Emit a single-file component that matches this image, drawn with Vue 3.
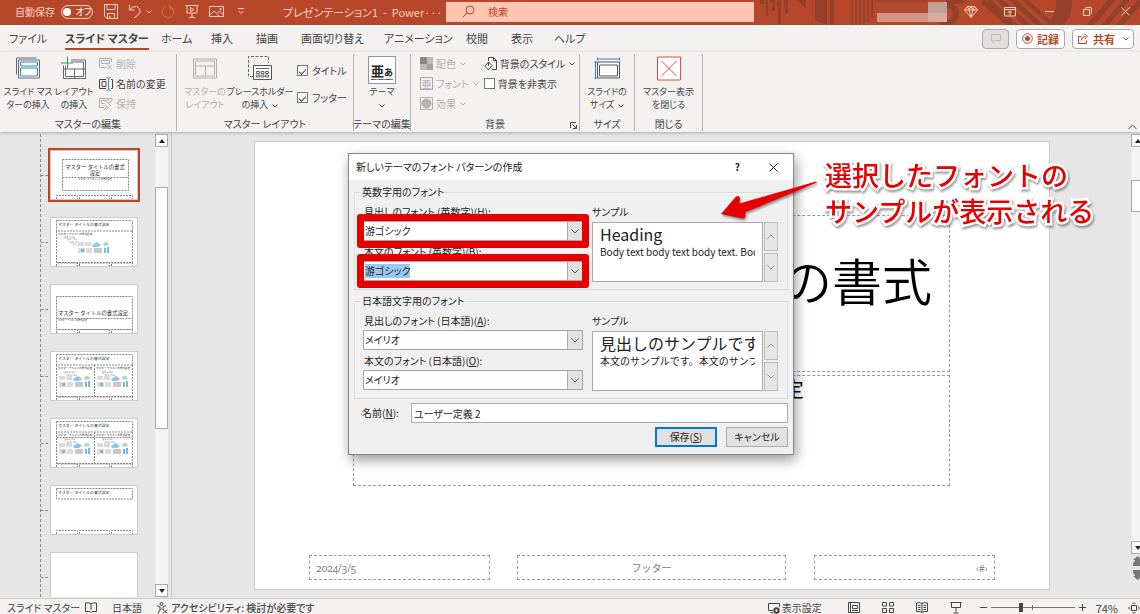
<script setup>
import { ref } from 'vue'

const tabs = ['ファイル', 'スライド マスター', 'ホーム', '挿入', '描画', '画面切り替え', 'アニメーション', '校閲', '表示', 'ヘルプ']
const thumbs = ['title', 'content', 'section', 'two', 'compare', 'titleOnly', 'blank']

const showTitle = ref(true)
const showFooter = ref(true)
const hideBg = ref(false)
const themeName = ref('ユーザー定義 2')
const zoom = ref(36)

const groups = [
  {
    id: 'latin',
    legend: '英数字用のフォント',
    fields: [
      { id: 'lh', label: '見出しのフォント (英数字)(', key: 'H', value: '游ゴシック', marked: true, selected: false },
      { id: 'lb', label: '本文のフォント (英数字)(', key: 'B', value: '游ゴシック', marked: true, selected: true }
    ],
    heading: 'Heading',
    body: 'Body text body text body text. Body text body text.'
  },
  {
    id: 'jp',
    legend: '日本語文字用のフォント',
    fields: [
      { id: 'jh', label: '見出しのフォント (日本語)(', key: 'A', value: 'メイリオ', marked: false, selected: false },
      { id: 'jb', label: '本文のフォント (日本語)(', key: 'O', value: 'メイリオ', marked: false, selected: false }
    ],
    heading: '見出しのサンプルです',
    body: '本文のサンプルです。本文のサンプルです。'
  }
]
</script>

<template>
  <div class="app">
    <header class="titlebar">
      <svg class="pattern" width="380" height="25" viewBox="0 0 380 25" aria-hidden="true">
        <g fill="#94412b">
          <path d="M0 0h4v4H0zM6 0h2v16H6zM10 0h5v11h-3V3h-2zM17 0h4v24h-3V6h-1zM24 0h4v13h-3zM37 0h9v9zM55 0h12v25l-12-5zM70 0h4v25h-4z" />
          <path d="M91 0h2v25h-2zM95 0h2v25h-2zM99 0h2v25h-2zM103 0h2v25h-2zM107 0h2v22h-2zM111 0h2v18h-2z" />
          <path d="M116 0h51v12h-40z" opacity=".6" />
          <path d="M186 0h20l-4 4h-16zM222 0h9l27 25h-12l-24-21zM236 0h7l28 25h-8zM249 0h7l28 25h-8zM262 0h6l22 20v5zM296 0h16q1 14-8 25h-18q11-10 10-25zM326 25l22-25h8l-22 25zM341 25l22-25h7l-22 25zM356 25l22-25h2v6l-17 19z" />
        </g>
        <circle cx="187" cy="14" r="9" fill="none" stroke="#94412b" stroke-width="6" />
      </svg>
      <div class="quick">
        <span>自動保存</span>
        <button class="toggle" aria-label="自動保存 オフ"><i></i>オフ</button>
        <button aria-label="上書き保存"><svg width="14" height="15" viewBox="0 0 14 15"><path d="M.5.5h13v14H3l-2.500-2.500zM3 .5v5h8v-5M3.500 14.500v-5h7v5M6 14v-2" /></svg></button>
        <span class="undo">
          <button aria-label="元に戻す"><svg width="14" height="15" viewBox="0 0 14 15"><path d="M1.500 1v5h5M1.500 6Q4 2 8.500 2.500Q12.500 4 12 8Q11 11 6 14" /></svg></button>
          <svg width="6" height="4" viewBox="0 0 6 4"><path d="M.5.5L3 3 5.500.5" /></svg>
        </span>
        <button aria-label="やり直し" class="faded"><svg width="14" height="15" viewBox="0 0 14 15"><path d="M9 1v4h4M9.500 2.500Q13.500 5 12.500 9Q11 14 6.500 13.500Q1.500 12.500 1 8Q1.200 4 4.500 2" /></svg></button>
        <button aria-label="スライド ショー"><svg width="14" height="15" viewBox="0 0 14 15"><path d="M.5 1.500h13M2 1.500v7.500h10V1.500M7 9v4M4 13.500h6M5.500 3.500v4l3.500-2z" /></svg></button>
        <button aria-label="画像"><svg width="15" height="15" viewBox="0 0 15 15"><path d="M.5 2.500h14v10H.5zM1 11l4-4 5 5M8.500 9L10.500 7l4 4M11 4.500h1v1h-1z" /></svg></button>
        <svg class="more" width="8" height="7" viewBox="0 0 8 7"><path d="M1 .5h6M1.500 3L4 5.500 6.500 3" /></svg>
      </div>
      <div class="doc-title">プレゼンテーション1&nbsp; -&nbsp; Power···</div>
      <label class="search">
        <svg width="13" height="13" viewBox="0 0 13 13"><circle cx="8" cy="5" r="4" /><path d="M5 8L.5 12.500" /></svg>
        <input type="text" placeholder="検索" aria-label="検索" />
      </label>
      <div class="account"><i></i><i></i><i></i><i></i></div>
      <div class="window-buttons">
        <button aria-label="特典"><svg width="14" height="14" viewBox="0 0 14 14"><path d="M3.500 1.500h7L13.500 5 7 12.500.5 5zM.5 5h13M3.500 1.500L5 5l2 7.500L9 5l1.500-3.500M5 5l2-3.500L9 5" /></svg></button>
        <button aria-label="リボンの表示オプション"><svg width="12" height="10" viewBox="0 0 12 10"><path d="M.5.5h11v8.500H.5zM.5 2.500h11M6 8V4M4 5.500L6 3.800l2 1.700" /></svg></button>
        <button aria-label="最小化"><svg width="9" height="9" viewBox="0 0 9 9"><path d="M0 4.500h9" /></svg></button>
        <button aria-label="元に戻す (縮小)"><svg width="9" height="9" viewBox="0 0 9 9"><path d="M.5 2.500h6v6h-6zM2.500 2.500v-1.500l.5-.5h5l.5.5v5l-.5.500h-1.500" /></svg></button>
        <button aria-label="閉じる"><svg width="9" height="9" viewBox="0 0 9 9"><path d="M.5.5l8 8M8.500.5l-8 8" /></svg></button>
      </div>
    </header>

    <nav class="tabs">
      <div class="tab-list">
        <a v-for="(t, i) in tabs" :key="t" href="#" :class="{ active: i === 1 }">{{ t }}</a>
      </div>
      <div class="tab-actions">
        <button class="comment" aria-label="コメント"><svg width="10" height="9" viewBox="0 0 10 9"><path d="M.5.5h9v6H4L2 8.500v-2H.5z" /></svg></button>
        <button><svg width="11" height="11" viewBox="0 0 11 11"><circle cx="5.500" cy="5.500" r="4.800" /><circle class="solid" cx="5.500" cy="5.500" r="2.500" /></svg>記録</button>
        <button class="share"><svg width="11" height="11" viewBox="0 0 11 11"><path d="M3.500 3.500h-3v7h8v-3M3 7.500Q3.500 3.500 7.500 3.500M6.500 1l3 2.500-3 2.500" /></svg>共有<svg class="caret" width="6" height="4" viewBox="0 0 6 4"><path d="M.5.5L3 3 5.500.5" /></svg></button>
      </div>
    </nav>

    <section class="ribbon">
      <div class="group g-edit">
        <div class="tools">
          <button class="big"><svg width="26" height="24" viewBox="0 0 26 24"><path stroke="#666" fill="#f3f2f1" d="M1.500 18V1.500h20" /><path stroke="#666" fill="#fff" d="M3.500 3.500h21v18h-21z" /><path stroke="#2b88c8" fill="#fff" d="M5.500 5.500h17v4h-17zM5.500 11.500h17v8h-17z" /></svg><span>スライド マス<br>ターの挿入</span></button>
          <button class="big"><svg width="26" height="24" viewBox="0 0 26 24"><path stroke="#666" fill="#fff" d="M2.500 9v13h22V3.500H10M3 12.500h21M13.500 12.500v9" /><path stroke="#666" d="M4.500 9v11h18V5.500H10" /><path stroke="#21a04a" d="M6.500 0v12M0 6.500h12" /></svg><span>レイアウト<br>の挿入</span></button>
          <div class="rows">
            <button class="small off"><svg width="14" height="14" viewBox="0 0 14 14"><path d="M7 10.500H.5v-9h12V5M2.500 3.500h8v3h-8zM8 7.500l5 5M13 7.500l-5 5" /></svg>削除</button>
            <button class="small"><svg width="14" height="14" viewBox="0 0 14 14"><path d="M7 2.500H.5v9H7M3 4.500h4v5H3zM12 2.500h1.500v9H12" /><path stroke="#2b88c8" d="M7.500.5Q9.500.5 9.500 2v10q0 1.500-2 1.500M11.500.5Q9.500.5 9.500 2v10q0 1.500 2 1.500" /></svg>名前の変更</button>
            <button class="small off"><svg width="14" height="14" viewBox="0 0 14 14"><path d="M13 4V1.500H.5v9H5M2.500 3.500h7M2.500 3.500v3h3M8 5l4 4M12.500 3.500L9.500 6.500M6 7.500l4 4M8 9.500l-3 3.500" /></svg>保持</button>
          </div>
        </div>
        <div class="caption">マスターの編集</div>
      </div>

      <div class="group g-layout">
        <div class="tools">
          <button class="big off"><svg width="26" height="24" viewBox="0 0 26 24"><path d="M1.500 2.500h23v19h-23zM3.500 4.500h19v5h-19zM3.500 9.500v10h19v-10M13.500 9.500v10" /></svg><span>マスターの<br>レイアウト</span></button>
          <button class="big"><svg width="26" height="25" viewBox="0 0 26 25"><path stroke="#666" stroke-dasharray="3 1.500" d="M6 20.500H1.500v-20h20V7" /><path stroke="#555" fill="#fff" d="M6.500 9.500h18v14h-18z" /><path stroke="#666" d="M9 12.500h13M9.500 15.500h3v2h-3zM14 15.500h3v2h-3zM18.500 15.500h3v2h-3zM9.500 19h3v2h-3zM14 19h3v2h-3zM18.500 19h3v2h-3z" /></svg><span>プレースホルダー<br>の挿入<svg class="caret" width="6" height="4" viewBox="0 0 6 4"><path d="M.5.5L3 3 5.500.5" /></svg></span></button>
          <div class="checks">
            <label><input v-model="showTitle" type="checkbox" />タイトル</label>
            <label><input v-model="showFooter" type="checkbox" />フッター</label>
          </div>
        </div>
        <div class="caption">マスター レイアウト</div>
      </div>

      <div class="group g-theme">
        <div class="tools">
          <button class="big theme"><span class="theme-icon"><b>亜<small>あ</small></b><i></i></span><span>テーマ<br><svg class="caret" width="6" height="4" viewBox="0 0 6 4"><path d="M.5.5L3 3 5.500.5" /></svg></span></button>
        </div>
        <div class="caption">テーマの編集</div>
      </div>

      <div class="group g-bg">
        <div class="tools">
          <div class="rows">
            <button class="small off"><svg width="13" height="13" viewBox="0 0 13 13" class="flat"><path fill="#888" d="M0 0h7v7H0z" /><path fill="#bbb" d="M7 0h6v7H7zM0 7h7v6H0z" /><path fill="#a0a0a0" d="M7 7h6v6H7z" /></svg>配色<svg class="caret" width="6" height="4" viewBox="0 0 6 4"><path d="M.5.5L3 3 5.500.5" /></svg></button>
            <button class="small off"><span class="glyph">亜</span>フォント<svg class="caret" width="6" height="4" viewBox="0 0 6 4"><path d="M.5.5L3 3 5.500.5" /></svg></button>
            <button class="small off"><svg width="13" height="13" viewBox="0 0 13 13"><path d="M.5.5h12v12H.5z" /><circle cx="6.500" cy="6.500" r="4.500" fill="#b4b4b4" /></svg>効果<svg class="caret" width="6" height="4" viewBox="0 0 6 4"><path d="M.5.5L3 3 5.500.5" /></svg></button>
          </div>
          <div class="rows">
            <button class="small"><svg width="13" height="14" viewBox="0 0 13 14"><path d="M4.500 4V.5h5l3 3v9H8M9.500.5v3h3M1 9l3.500-4L8 8.500 4.500 13 1 9.500zM4.500 5v4" /></svg>背景のスタイル<svg class="caret" width="6" height="4" viewBox="0 0 6 4"><path d="M.5.5L3 3 5.500.5" /></svg></button>
            <label class="small"><input v-model="hideBg" type="checkbox" />背景を非表示</label>
          </div>
        </div>
        <div class="caption">背景<button class="launcher" aria-label="背景の書式設定"><svg width="7" height="7" viewBox="0 0 7 7"><path d="M.5 6V.5H6M2.500 2.500l4 4M6.500 3v3.500H3" /></svg></button></div>
      </div>

      <div class="group g-size">
        <div class="tools">
          <button class="big"><svg width="26" height="24" viewBox="0 0 26 24"><path stroke="#2b88c8" d="M3.500 2.500h22M3.500 1v3M25.500 1v3M1.500 5v17M0 5.500h3M0 21.500h3" /><path stroke="#555" fill="#fff" d="M3.500 5.500h22v16h-22z" /><path stroke="#555" fill="#fafafa" d="M5.500 8.500h18v11h-18z" /></svg><span>スライドの<br>サイズ<svg class="caret" width="6" height="4" viewBox="0 0 6 4"><path d="M.5.5L3 3 5.500.5" /></svg></span></button>
        </div>
        <div class="caption">サイズ</div>
      </div>

      <div class="group g-close">
        <div class="tools">
          <button class="big"><svg width="24" height="24" viewBox="0 0 24 24"><path stroke="#e8483f" fill="#fff" d="M.5.5h23v23H.5z" /><path stroke="#e8483f" d="M4.500 4.500l15 15M19.500 4.500l-15 15" /></svg><span>マスター表示<br>を閉じる</span></button>
        </div>
        <div class="caption">閉じる</div>
      </div>
      <button class="collapse" aria-label="リボンを折りたたむ"><svg width="9" height="6" viewBox="0 0 9 6"><path d="M.5 5l4-4 4 4" /></svg></button>
    </section>

    <main class="work">
      <aside class="panel">
        <ul class="list">
          <li v-for="(kind, i) in thumbs" :key="kind" :class="{ current: i === 0 }">
            <svg width="86" height="48" viewBox="0 0 86 48">
              <template v-if="kind === 'title'">
                <path d="M11.500 8.500h66v31h-66zM11.500 26.500h66" />
                <text x="44" y="18" font-size="5.300" text-anchor="middle">マスター タイトルの書式</text>
                <text x="44" y="24" font-size="5.300" text-anchor="middle">設定</text>
                <text x="44" y="29" font-size="2.200" text-anchor="middle">マスター サブタイトルの書式設定</text>
              </template>
              <template v-if="kind === 'section'">
                <path d="M5.500 11.500h76v33h-76zM5.500 33.500h76" />
                <text x="7" y="30" font-size="5.300">マスター タイトルの書式設定</text>
                <text x="7" y="36" font-size="2.200">マスター テキストの書式設定</text>
              </template>
              <template v-if="['content', 'two', 'compare', 'titleOnly'].includes(kind)">
                <path d="M5.500 2.500h76v10.500h-76z" />
                <text x="7" y="8" font-size="3.900">マスター タイトルの書式設定</text>
              </template>
              <template v-if="kind === 'content'">
                <path d="M5.500 13v32h76V13" />
                <text x="7" y="16.500" font-size="2.600">マスター テキストの書式設定</text>
                <text x="11" y="19.500" font-size="2.200">・第 2 レベル</text>
                <text x="14" y="22" font-size="2">・第 3 レベル</text>
                <text x="17" y="25" font-size="1.800">・第 4 レベル</text>
                <text x="20" y="27" font-size="1.800">・第 5 レベル</text>
              </template>
              <template v-if="kind === 'two' || kind === 'compare'">
                <path d="M5.500 13v32h76V13M43.500 13v32" />
                <path v-if="kind === 'compare'" d="M5.500 18.500h76" />
                <g v-for="x in [7, 45]" :key="x">
                  <text :x="x" y="16.500" font-size="2.600">マスター テキストの書式設定</text>
                  <text :x="x + 4" y="21" font-size="2.200">・第 2 レベル</text>
                  <text :x="x + 7" y="24" font-size="2">・第 3 レベル</text>
                </g>
              </template>
              <g v-for="x in (kind === 'content' ? [27] : kind === 'two' || kind === 'compare' ? [8, 46] : [])" :key="'i' + x" :transform="`translate(${x} 24)`" class="tiles">
                <path fill="#d3dde4" d="M0 0h6v4H0zM7 0h6v4H7z" />
                <path fill="#8cc4ec" d="M14 3l5-3 4 3-3 2h-5z" />
                <path fill="#a9dcb0" d="M25 1l4-1.500L31 3l-5 1z" />
                <path fill="#dcdcdc" d="M0 6h7v5H0zM8 6h6v5H8z" />
                <path fill="#78b8e8" d="M3 7h3v3H3zM26 6h2v5h-2zM29 5h2v6h-2z" />
                <path fill="#c8c8c8" d="M16 6h8v5h-8z" />
              </g>
              <g v-if="kind !== 'blank'">
                <path d="M5.500 48v-3.500h21V48M28.500 48v-3.500h30V48M60.500 48v-3.500h21V48" />
              </g>
            </svg>
          </li>
        </ul>
        <div class="scroll">
          <button aria-label="上へ"><svg width="6" height="4" viewBox="0 0 6 4"><path d="M0 4l3-4 3 4z" /></svg></button>
          <div class="track"><div class="bar"></div></div>
          <button aria-label="下へ"><svg width="6" height="4" viewBox="0 0 6 4"><path d="M0 0l3 4 3-4z" /></svg></button>
        </div>
      </aside>

      <section class="canvas">
        <div class="slide">
          <div class="ph ph-title">マスター タイトルの書式設定</div>
          <div class="ph ph-sub">マスター サブタイトルの書式設定</div>
          <div class="ph foot date">2024/3/5</div>
          <div class="ph foot center">フッター</div>
          <div class="ph foot num">‹#›</div>
        </div>
      </section>

      <div class="scroll right">
        <button aria-label="上へ"><svg width="6" height="4" viewBox="0 0 6 4"><path d="M0 4l3-4 3 4z" /></svg></button>
        <div class="track"><div class="bar"></div></div>
        <button aria-label="下へ"><svg width="6" height="4" viewBox="0 0 6 4"><path d="M0 0l3 4 3-4z" /></svg></button>
        <button class="jump" aria-label="前のスライド"><svg width="9" height="10" viewBox="0 0 9 10"><path d="M4.500 0L9 4H7v1l2 2v3H0V7l2-2V4H0z" /></svg></button>
        <button class="jump" aria-label="次のスライド"><svg width="9" height="10" viewBox="0 0 9 10"><path d="M4.500 10L9 6H7V5l2-2V0H0v3l2 2v1H0z" /></svg></button>
      </div>
    </main>

    <footer class="status">
      <span class="mode">スライド マスター</span>
      <svg width="12" height="11" viewBox="0 0 12 11"><path d="M6 2Q3.500 0 .5 1v8.500H4Q5.500 9.500 6 10.500 6.500 9.500 8 9.500h3.500V1Q8.500 0 6 2zM6 2v6" /></svg>
      <span class="lang">日本語</span>
      <button class="acc"><svg width="12" height="12" viewBox="0 0 12 12"><circle cx="5.500" cy="2" r="1.500" /><path d="M1 3.500l3 1.500v2.500L2 11.500M10 3.500L7 5v2l.5 1M4 8l1.500-1M7 7.500l4 4M11 7.500l-4 4" /></svg>アクセシビリティ: 検討が必要です</button>
      <div class="status-right">
        <button class="display"><svg width="12" height="12" viewBox="0 0 12 12"><path d="M5 8.500H.5v-7h11V5M2.500 10.500H5" /><circle cx="8.500" cy="8.500" r="2.200" stroke-width="2" /></svg>表示設定</button>
        <button aria-label="標準"><svg width="12" height="11" viewBox="0 0 12 11"><path d="M.5.5h11v10H.5zM2.500.5v10M4.500 3.500h5v3h-5zM4 8.500h6" /></svg></button>
        <button aria-label="スライド一覧"><svg width="12" height="11" viewBox="0 0 12 11"><path d="M.5.5h4v3.500h-4zM7.500.5h4v3.500h-4zM.5 6.500h4v4h-4zM7.500 6.500h4v4h-4z" /></svg></button>
        <button aria-label="閲覧表示"><svg width="12" height="11" viewBox="0 0 12 11"><path d="M6 1.500Q3.500 0 .5 1v8.500Q4 9 6 10.500 8 9 11.500 9.500V1Q8.500 0 6 1.500zM6 2v8M2 3.500h2.500M2 5.500h2.500M2 7.500h2.500M7.500 3.500H10M7.500 5.500H10M7.500 7.500H10" /></svg></button>
        <button aria-label="スライド ショー"><svg width="12" height="12" viewBox="0 0 12 12"><path d="M.5.5h11M1.500.5v5h9v-5M6 5.500v5M3.500 11h5" /></svg></button>
        <div class="zoomer">
          <button aria-label="縮小"><svg width="7" height="7" viewBox="0 0 7 7"><path d="M0 3.500h7" /></svg></button>
          <input v-model="zoom" type="range" min="0" max="100" aria-label="ズーム" />
          <button aria-label="拡大"><svg width="7" height="7" viewBox="0 0 7 7"><path d="M0 3.500h7M3.500 0v7" /></svg></button>
        </div>
        <span class="percent">74%</span>
        <button aria-label="ウィンドウに合わせる"><svg width="12" height="12" viewBox="0 0 12 12"><path d="M3.500 3.500h5v5h-5zM4.500 2L6 .5 7.500 2M4.500 10L6 11.500 7.500 10M2 4.500L.5 6 2 7.500M10 4.500L11.500 6 10 7.500" /></svg></button>
      </div>
    </footer>

    <form class="dialog" role="dialog" aria-label="新しいテーマのフォント パターンの作成" @submit.prevent>
      <div class="dialog-title">
        <span>新しいテーマのフォント パターンの作成</span>
        <button type="button" class="help" aria-label="ヘルプ">?</button>
        <button type="button" aria-label="閉じる"><svg width="9" height="9" viewBox="0 0 9 9"><path d="M.5.5l8 8M8.500.5l-8 8" /></svg></button>
      </div>
      <div class="dialog-body">
        <fieldset v-for="g in groups" :key="g.id">
          <legend>{{ g.legend }}</legend>
          <div class="cols">
            <div class="fields">
              <template v-for="f in g.fields" :key="f.id">
                <label :for="f.id">{{ f.label }}<u>{{ f.key }}</u>):</label>
                <div class="combo" :class="{ marked: f.marked }">
                  <select :id="f.id" :class="{ selected: f.selected }"><option>{{ f.value }}</option></select>
                  <span class="arrow"><svg width="8" height="5" viewBox="0 0 8 5"><path d="M.5.5L4 4 7.500.5" /></svg></span>
                </div>
              </template>
            </div>
            <div class="sample">
              <span class="sample-label">サンプル</span>
              <div class="preview">
                <div class="paper"><div><p class="h">{{ g.heading }}</p><p>{{ g.body }}</p></div></div>
                <div class="spin">
                  <button type="button" aria-label="上へ"><svg width="8" height="5" viewBox="0 0 8 5"><path d="M.5 4.500L4 1l3.500 3.500" /></svg></button>
                  <button type="button" aria-label="下へ"><svg width="8" height="5" viewBox="0 0 8 5"><path d="M.5.5L4 4 7.500.5" /></svg></button>
                </div>
              </div>
            </div>
          </div>
        </fieldset>
        <div class="name-row">
          <label for="theme-name">名前(<u>N</u>):</label>
          <input id="theme-name" v-model="themeName" type="text" />
        </div>
        <div class="actions">
          <button type="submit" class="primary">保存(<u>S</u>)</button>
          <button type="button">キャンセル</button>
        </div>
      </div>
    </form>

    <svg class="pointer" width="100" height="40" viewBox="0 0 100 40" aria-hidden="true">
      <path d="M2 34L17 16.500Q20 15 21 18L20.500 23.500L97 1.500L98 2.500L37 28L26.500 32L26.500 36Q26 39 23 38.500z" />
    </svg>
    <p class="note">選択したフォントの<br>サンプルが表示される</p>
  </div>
</template>

<style>
html,
body {
  margin: 0;
  overflow: hidden;
}
</style>

<style scoped>
.app {
  position: relative;
  display: grid;
  grid-template-columns: minmax(0, 1fr);
  grid-template-rows: auto auto auto minmax(0, 1fr) auto;
  height: 100vh;
  overflow: hidden;
  background: #e6e6e6;
  color: #444;
  font: 10px/14px "Noto Sans CJK JP", "Noto Sans", sans-serif;
  font-feature-settings: "palt";
  white-space: nowrap;
}
.app * { box-sizing: border-box; }
button, input, select {
  font: inherit;
  font-feature-settings: inherit;
  color: inherit;
  margin: 0;
  padding: 0;
  border: 0;
  background: none;
}
button { display: flex; align-items: center; justify-content: center; }
svg { fill: none; stroke: currentColor; flex: none; display: block; }
p, ul, fieldset { margin: 0; padding: 0; }
a { color: inherit; text-decoration: none; }

.titlebar {
  position: relative;
  display: flex;
  align-items: center;
  height: 25px;
  padding: 0 10px 2px 15px;
  background: #b7472a;
  color: #f8cfc1;
}
.pattern { position: absolute; right: 0; top: 0; stroke: none; }
.quick { display: flex; align-items: center; gap: 10px; flex: 0 0 268px; }
.toggle {
  width: 32px;
  height: 14px;
  margin-left: -4px;
  margin-right: 1px;
  border: 1px solid #f8cfc1;
  border-radius: 7px;
  gap: 5px;
  font-size: 9px;
  color: #fff;
}
.toggle i { width: 8px; height: 8px; border-radius: 50%; background: #fff; }
.undo { display: flex; align-items: center; gap: 4px; margin-right: -1px; }
.faded { color: #d9694c; }
.more { margin-left: 3px; }
.doc-title { flex: 0 0 163px; font-size: 11px; }
.search {
  display: flex;
  align-items: center;
  flex: 0 1 308px;
  gap: 13px;
  height: 20px;
  padding-left: 16px;
  background: #ffc7b3;
  color: #b7472a;
}
.search input { flex: 1; min-width: 0; outline: 0; }
.search input::placeholder { color: #b7472a; opacity: 1; }
.account { position: relative; display: grid; grid-template-columns: 51px 19px; grid-template-rows: 11px 9px; margin-left: auto; margin-right: 17px; }
.account i:nth-child(1) { background: #b04a30; }
.account i:nth-child(2) { background: #bfa09b; }
.account i:nth-child(3) { background: #d29383; }
.account i:nth-child(4) { background: #d6aca2; }
.window-buttons { position: relative; display: flex; align-items: center; gap: 29px; }
.window-buttons button:first-child { margin-right: -3px; }

.tabs { display: flex; align-items: center; height: 27px; padding: 0 6px 0 9px; background: #f3f2f1; font-size: 11px; }
.tab-list { display: grid; grid-template-columns: 56px 96px 50px 45px 45px 83px 82px 45px 43px auto; justify-items: start; }
.tab-list a { height: 23px; padding-top: 4px; border-bottom: 2px solid transparent; }
.tab-list a.active { font-weight: 700; border-color: #b7472a; }
.tab-actions { display: flex; gap: 7px; margin-left: auto; }
.tab-actions button {
  height: 20px;
  gap: 4px;
  padding: 0 5px;
  border: 1px solid #aaa;
  border-radius: 4px;
  background: #fff;
  color: #b7472a;
  font-weight: 700;
}
.tab-actions .comment { width: 27px; background: #e1dfdd; color: #bbb; }
.tab-actions .share { padding: 0 4px 0 5px; }
.tab-actions .caret { margin-left: 4px; }
.solid { fill: #b7472a; stroke: none; }

.ribbon {
  position: relative;
  z-index: 1;
  display: flex;
  height: 80px;
  background: #f3f2f1;
  box-shadow: 0 1px 3px #aaa;
}
.group { display: flex; flex-direction: column; min-width: 0; margin: 2px 0 1px; border-right: 1px solid #b5b3b1; }
.g-edit { flex: 0 0 177px; }
.g-layout { flex: 0 0 177px; }
.g-theme { flex: 0 0 57px; }
.g-bg { flex: 0 0 169px; }
.g-size { flex: 0 0 55px; }
.g-close { flex: 0 0 68px; }
.tools { display: flex; flex: 1; justify-content: center; padding-top: 2px; }
.g-edit .tools, .g-layout .tools { justify-content: flex-start; padding-left: 5px; }
.caption { position: relative; display: flex; justify-content: center; line-height: 14px; }
.big { flex-direction: column; justify-content: flex-start; line-height: 13px; width: 46px; font-size: 9px; }
.g-edit .rows { padding-left: 2px; }
.big > svg { height: 25px; }
.big > span:last-child { margin-top: 4px; }
.big .caret { display: inline-block; vertical-align: middle; margin-left: 4px; }
.theme .caret { margin: 0; }
.g-layout .big + .big { width: 64px; }
.rows { display: flex; flex-direction: column; gap: 5px; }
.small { display: flex; align-items: center; justify-content: flex-start; gap: 3px; height: 15px; }
.off { color: #b1b0af; }
.small .caret { margin-left: 1px; }
.checks { display: flex; flex-direction: column; gap: 12px; padding: 7px 0 0 5px; }
.checks label { display: flex; align-items: center; gap: 4px; height: 15px; }
input[type="checkbox"] {
  appearance: none;
  display: grid;
  place-content: center;
  width: 11px;
  height: 11px;
  border: 1px solid #777;
  background: #fff;
}
input[type="checkbox"]:checked::before {
  content: "";
  width: 6px;
  height: 3px;
  border: solid #444;
  border-width: 0 0 1px 1px;
  transform: rotate(-45deg);
}
.theme-icon {
  display: flex;
  flex-direction: column;
  width: 28px;
  height: 28px;
  padding: 7px 2px 3px;
  border: 1px solid #8a97ad;
  background: #fff;
  color: #222;
}
.theme-icon b { font-size: 13px; line-height: 13px; }
.theme-icon small { font-size: 9px; }
.theme-icon i { height: 3px; background: linear-gradient(90deg, #555 0 20%, #e07020 20% 36%, #2b6cb0 36% 52%, #18b0d0 52% 68%, #c020a0 68% 84%, #30a030 84%); }
.big.theme > span:last-child { margin-top: 1px; }
.g-bg .tools { justify-content: flex-start; gap: 5px; padding-left: 9px; }
.flat { stroke: none; }
.glyph { width: 13px; height: 13px; border: 1px solid #aaa; line-height: 11px; text-align: center; }
.launcher { position: absolute; right: 2px; bottom: 2px; }
.collapse { position: absolute; right: 3px; bottom: 2px; }

.work { display: flex; min-height: 0; }
.panel { display: flex; flex: 0 0 172px; justify-content: space-between; padding: 2px 3px 1px 40px; border-right: 1px solid #c8c8c8; }
.list {
  display: flex;
  flex-direction: column;
  gap: 17px;
  list-style: none;
  padding: 16px 3px 0 9px;
  border-left: 1px dashed #888;
  overflow: hidden;
}
.list li { position: relative; flex: none; width: 88px; height: 50px; background: #fff; border: 1px solid #ccc; }
.list li::before { content: ""; position: absolute; left: -10px; top: 24px; width: 7px; border-top: 1px dashed #888; }
.list li.current { outline: 2px solid #b7472a; }
.list path { stroke: #888; stroke-width: 1; stroke-dasharray: 2 1; }
.list .tiles path { stroke: none; }
.list text { fill: #333; stroke: none; font-feature-settings: normal; }
.scroll { display: flex; flex-direction: column; width: 13px; background: #f3f3f3; }
.scroll button { height: 13px; border: 1px solid #aaa; background: #fff; color: #222; }
.scroll svg { fill: currentColor; stroke: none; }
.track { display: flex; flex-direction: column; flex: 1; padding-top: 40px; }
.bar { height: 62%; background: #fff; border: 1px solid #aaa; }
.panel .track .bar { height: 61%; }
.canvas { display: flex; flex: 1; align-items: center; justify-content: center; min-width: 0; }
.slide { position: relative; height: calc(100% - 17px); aspect-ratio: 796 / 449; background: #fff; border: 1px solid #ccc; }
.right { width: 13px; margin-right: -4px; padding: 2px 0 16px; background: #e6e6e6; }
.right .track { padding-top: 33px; background: #f3f3f3; }
.right .bar { height: 32px; }
.right .jump { border: 0; background: none; color: #777; height: 14px; }
.ph { position: absolute; border: 1px dashed #999; color: #000; font-feature-settings: normal; }
.ph-title { left: 12.400%; top: 16.400%; width: 75.200%; height: 35.100%; padding: 33px 12px 0; font-size: 50px; line-height: 60px; font-weight: 350; text-align: center; white-space: normal; }
.ph-sub { left: 12.400%; top: 52.300%; width: 75.200%; height: 24.700%; font-size: 20px; line-height: 26px; text-align: center; }
.foot { top: 92.400%; height: 5.700%; color: #777; line-height: 24px; padding: 0 6px; }
.date { left: 6.900%; width: 22.700%; font-family: "Open Sans", sans-serif; font-variant-numeric: oldstyle-nums; }
.center { left: 33%; width: 34%; text-align: center; }
.num { left: 70.500%; width: 22.700%; text-align: right; }

.status { display: flex; align-items: center; height: 16px; padding: 2px 0 0 7px; border-top: 1px solid #ccc; background: #f3f2f1; }
.mode { flex: 0 0 78px; }
.lang { margin: 0 14px 0 15px; }
.acc { gap: 3px; font-weight: 500; }
.status-right { display: flex; align-items: center; gap: 22px; margin-left: auto; }
.display { gap: 2px; margin-right: 4px; }
.zoomer { display: flex; align-items: center; gap: 4px; margin-left: -4px; }
.zoomer input {
  appearance: none;
  width: 84px;
  height: 10px;
  background: linear-gradient(#777, #777) center / 100% 1px no-repeat, linear-gradient(#777, #777) center / 1px 5px no-repeat;
}
.zoomer input::-webkit-slider-thumb { appearance: none; width: 4px; height: 9px; background: #444; }
.percent { margin: 0 -12px 0 -12px; font-size: 11px; }

.dialog {
  position: absolute;
  z-index: 2;
  left: 348px;
  top: 153px;
  width: 446px;
  border: 1px solid #888;
  background: #f0f0f0;
  box-shadow: 2px 5px 12px rgba(0, 0, 0, .4);
  color: #222;
}
.dialog-title { display: flex; align-items: center; height: 26px; padding: 0 15px 0 7px; background: #fff; }
.dialog-title span { flex: 1; }
.help { margin-right: 29px; font-weight: 700; }
.dialog-body { padding: 5px; }
fieldset { min-width: 0; height: 105px; margin-bottom: 4px; padding: 0 8px; border: 1px solid #dcdcdc; }
legend { margin-left: -2px; padding: 0 1px; line-height: 14px; }
.cols { display: flex; gap: 9px; padding-top: 7px; }
.fields { flex: 0 0 220px; }
.fields label { display: block; height: 15px; padding-left: 1px; line-height: 12px; }
.fields .combo + label { margin-top: 5px; }
.combo { position: relative; height: 20px; }
.combo select { appearance: none; width: 100%; height: 20px; padding-left: 1px; border: 1px solid #a5a5a5; background: #fff; line-height: 18px; outline: 0; }
.combo select.selected { background: linear-gradient(#99c9ef, #99c9ef) 1px 2px / 45px 14px no-repeat #fff; }
.arrow { position: absolute; right: 1px; top: 1px; display: grid; place-content: center; width: 15px; height: 18px; border-left: 1px solid #aaa; background: #e1e1e1; pointer-events: none; color: #555; }
.marked::after { content: ""; position: absolute; inset: -7px -6px; border: 7px solid #e60000; border-radius: 3px; pointer-events: none; }
.sample { flex: 1; min-width: 0; }
.sample-label { display: block; height: 16px; line-height: 12px; }
.preview { display: flex; gap: 1px; height: 60px; }
.paper { flex: 0 0 171px; min-width: 0; padding: 0 7px; border: 1px solid #aaa; background: #fff; font-feature-settings: normal; }
.paper div { overflow: hidden; line-height: 14px; }
.paper .h { font-size: 16px; line-height: 22px; }
.spin { display: flex; flex-direction: column; gap: 2px; flex: 0 0 14px; }
.spin button { flex: 1; border: 1px solid #bbb; background: #e6e6e6; color: #999; }
.name-row { display: flex; align-items: center; gap: 8px; padding: 0 0 0 8px; }
.name-row label { flex: 0 0 41px; }
.name-row input { flex: 1; min-width: 0; height: 20px; padding: 0 2px; border: 1px solid #aaa; background: #fff; }
.actions { display: flex; justify-content: flex-end; gap: 9px; margin-top: 4px; padding-bottom: 2px; }
.actions button { width: 62px; height: 20px; border: 1px solid #adadad; background: #e1e1e1; }
.actions .primary { border: 2px solid #0078d7; }

.pointer { position: absolute; z-index: 3; left: 719px; top: 180px; overflow: visible; fill: #e60000; stroke: none; filter: drop-shadow(1px 2px 1px rgba(0, 0, 0, .4)); }
.note {
  position: absolute;
  z-index: 3;
  left: 825px;
  top: 157px;
  color: #e60000;
  font-size: 27px;
  font-weight: 500;
  font-feature-settings: normal;
  line-height: 36px;
  -webkit-text-stroke: 5px #fff;
  paint-order: stroke fill;
  filter: drop-shadow(1px 2px 1px rgba(0, 0, 0, .4));
}
</style>
